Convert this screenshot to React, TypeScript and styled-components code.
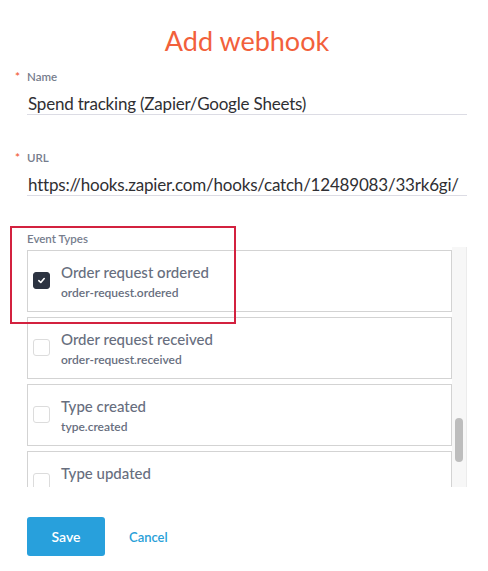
import React from "react";
import styled, { createGlobalStyle } from "styled-components";

const GlobalStyle = createGlobalStyle`
  body {
    margin: 0;
    background: #fff;
    font-family: "Lato", "Open Sans", sans-serif;
  }
`;

const Page = styled.div`
  position: relative;
  width: 440px;
  padding: 26px 21px 0 27px;
`;

const Title = styled.h1`
  margin: 0;
  text-align: center;
  font-size: 27px;
  line-height: 30px;
  font-weight: 400;
  color: #f2603b;
`;

const Field = styled.div<{ $top: number }>`
  margin-top: ${(p) => p.$top}px;
`;

const Label = styled.div`
  display: flex;
  align-items: center;
  font-size: 11.5px;
  line-height: 14px;
  font-weight: 600;
  color: #767d8d;
`;

const Star = styled.span`
  width: 12px;
  margin-left: -12px;
  color: #f2603b;
  font-size: 12px;
`;

const Input = styled.div`
  margin-top: 10px;
  padding: 0 0 0 1px;
  font-size: 17px;
  line-height: 20px;
  letter-spacing: -0.2px;
  color: #2f2f33;
  border-bottom: 1px solid #dcdce4;
  white-space: nowrap;
`;

const ListWrap = styled.div`
  display: flex;
  height: 240px;
  margin-top: 1px;
`;

const List = styled.div`
  flex: 1;
  overflow: hidden;
  padding-top: 3px;
`;

const Item = styled.div`
  display: flex;
  align-items: center;
  height: 60px;
  margin-bottom: 5px;
  padding-left: 5px;
  border: 1px solid #d3d3d3;
`;

const Box = styled.div<{ $checked?: boolean }>`
  width: 17px;
  height: 17px;
  box-sizing: border-box;
  flex-shrink: 0;
  margin-top: -2px;
  border-radius: 3px;
  display: flex;
  align-items: center;
  justify-content: center;
  background: ${(p) => (p.$checked ? "#2c3341" : "#fff")};
  border: 1px solid ${(p) => (p.$checked ? "#2c3341" : "#dcdcdc")};
`;

const ItemText = styled.div`
  margin-left: 11px;
`;

const ItemTitle = styled.div`
  font-size: 15px;
  line-height: 18px;
  font-weight: 500;
  color: #676e7e;
`;

const ItemKey = styled.div`
  margin-top: 5px;
  font-size: 12px;
  line-height: 14px;
  font-weight: 600;
  color: #676e7e;
`;

const Track = styled.div`
  width: 14px;
  display: flex;
  justify-content: center;
  background: #f7f7f7;
  border-right: 1px solid #ececec;
`;

const Thumb = styled.div`
  width: 8px;
  height: 44px;
  margin-top: 171px;
  border-radius: 4px;
  background: #bdbdbd;
`;

const Actions = styled.div`
  display: flex;
  align-items: center;
  gap: 24px;
  margin-top: 30px;
`;

const SaveButton = styled.button`
  width: 78px;
  height: 39px;
  border: none;
  border-radius: 3px;
  background: #28a0dc;
  color: #fff;
  font-family: inherit;
  font-size: 14px;
  font-weight: 600;
`;

const CancelLink = styled.a`
  font-size: 13px;
  font-weight: 600;
  color: #2a9fd8;
`;

const Highlight = styled.div`
  position: absolute;
  left: 10px;
  top: 226px;
  width: 222px;
  height: 94px;
  border: 2px solid #d3213f;
`;

const events = [
  { title: "Order request ordered", key: "order-request.ordered", checked: true },
  { title: "Order request received", key: "order-request.received" },
  { title: "Type created", key: "type.created" },
  { title: "Type updated", key: "type.updated" },
];

const App: React.FC = () => {
  return (
    <Page>
      <GlobalStyle />
      <Title>Add webhook</Title>
      <Field $top={14}>
        <Label>
          <Star>*</Star>Name
        </Label>
        <Input>Spend tracking (Zapier/Google Sheets)</Input>
      </Field>
      <Field $top={36}>
        <Label>
          <Star>*</Star>URL
        </Label>
        <Input>https://hooks.zapier.com/hooks/catch/12489083/33rk6gi/</Input>
      </Field>
      <Field $top={36}>
        <Label>Event Types</Label>
        <ListWrap>
          <List>
            {events.map((e) => (
              <Item key={e.key}>
                <Box $checked={e.checked}>
                  {e.checked && (
                    <svg width="9" height="9" viewBox="0 0 10 10">
                      <path d="M2 5.2 L4.2 7.2 L8 2.8" fill="none" stroke="#fff" strokeWidth="1.8" strokeLinecap="round" strokeLinejoin="round" />
                    </svg>
                  )}
                </Box>
                <ItemText>
                  <ItemTitle>{e.title}</ItemTitle>
                  <ItemKey>{e.key}</ItemKey>
                </ItemText>
              </Item>
            ))}
          </List>
          <Track>
            <Thumb />
          </Track>
        </ListWrap>
      </Field>
      <Actions>
        <SaveButton>Save</SaveButton>
        <CancelLink>Cancel</CancelLink>
      </Actions>
      <Highlight />
    </Page>
  );
};

export default App;
